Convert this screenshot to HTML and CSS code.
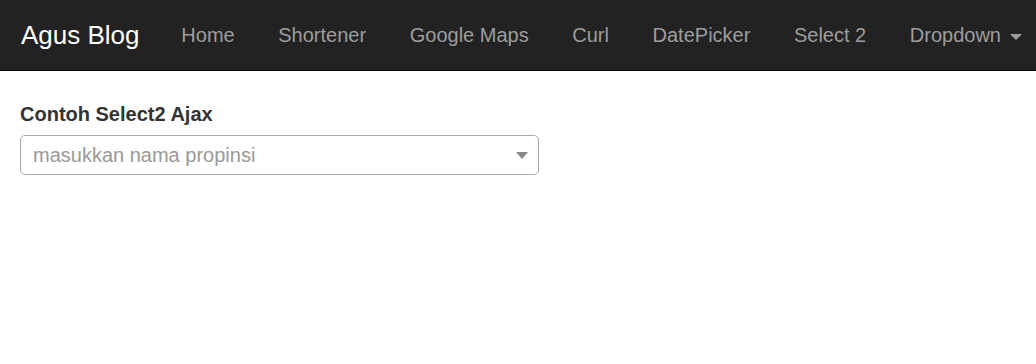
FILE: index.html
```html
<!DOCTYPE html>
<html lang="en">
<head>
  <meta charset="UTF-8" />
  <meta name="viewport" content="width=device-width, initial-scale=1.0"/>
  <title>Agus Blog - Select2</title>
  <link rel="stylesheet" href="styles.css">
</head>
<body>
  <nav class="navbar">
    <a class="navbar-brand" href="#">Agus Blog</a>
    <ul class="nav">
      <li><a href="#">Home</a></li>
      <li><a href="#">Shortener</a></li>
      <li><a href="#">Google Maps</a></li>
      <li><a href="#">Curl</a></li>
      <li><a href="#">DatePicker</a></li>
      <li><a href="#">Select 2</a></li>
      <li><a href="#">Dropdown <span class="caret"></span></a></li>
    </ul>
  </nav>

  <div class="container">
    <label class="label" for="propinsi">Contoh Select2 Ajax</label>
    <div class="select2" id="propinsi">
      <span class="select2-placeholder">masukkan nama propinsi</span>
      <span class="select2-arrow"></span>
    </div>
  </div>
</body>
</html>
```

FILE: styles.css
```css
body { margin: 0; font-family: "Liberation Sans", Arial, sans-serif; font-size: 20px; line-height: 1.42857; color: #333; background-color: #fff; overflow-x: hidden; }
a { text-decoration: none; }
.navbar { display: flex; align-items: center; height: 70px; padding: 0 21px; background-color: #222; border-bottom: 1px solid #080808; margin-bottom: 29px; overflow: hidden; white-space: nowrap; }
.navbar-brand { flex-shrink: 0; margin-left: -21px; padding: 21px 20px 21px 21px; font-size: 26px; line-height: 28px; color: #fff; }
.nav { display: flex; flex-shrink: 0; list-style: none; margin: 0; padding: 0; }
.nav a { display: block; padding: 21px 21.8px; font-size: 20px; line-height: 28px; color: #9d9d9d; }
.caret { display: inline-block; width: 0; height: 0; margin-left: 3px; vertical-align: middle; border-top: 6px solid #9d9d9d; border-left: 6px solid transparent; border-right: 6px solid transparent; }
.container { padding: 0 20px; }
.label { display: block; margin-bottom: 7px; font-weight: bold; font-size: 20px; line-height: 28px; }
.select2 { display: flex; align-items: center; justify-content: space-between; box-sizing: border-box; width: 519px; height: 40px; padding: 0 10px 0 12px; border: 1px solid #aaa; border-radius: 5px; background-color: #fff; }
.select2-placeholder { color: #999; font-size: 20px; }
.select2-arrow { width: 0; height: 0; border-top: 7px solid #888; border-left: 6px solid transparent; border-right: 6px solid transparent; }
```
